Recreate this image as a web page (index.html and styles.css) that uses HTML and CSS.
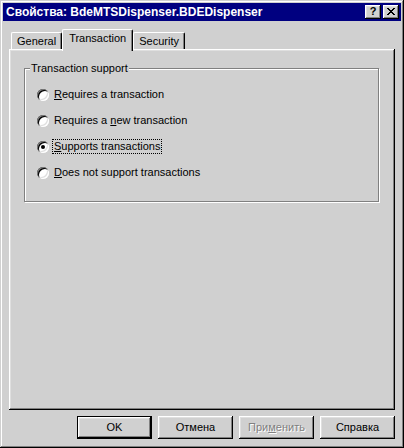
FILE: index.html
```html
<!DOCTYPE html>
<html>
<head>
<meta charset="utf-8">
<link rel="stylesheet" href="styles.css">
</head>
<body>
<div class="window">
  <div class="titlebar">
    <span class="title">Свойства: BdeMTSDispenser.BDEDispenser</span>
    <div class="tbtns">
      <span class="tbtn help">?</span>
      <span class="tbtn close"><svg width="8" height="7" viewBox="0 0 8 7" shape-rendering="crispEdges"><path fill="#000" d="M0 0h2v1H0zM6 0h2v1H6zM1 1h2v1H1zM5 1h2v1H5zM2 2h4v1H2zM3 3h2v1H3zM2 4h4v1H2zM1 5h2v1H1zM5 5h2v1H5zM0 6h2v1H0zM6 6h2v1H6z"/></svg></span>
    </div>
  </div>
  <div class="content">
    <div class="tabs">
      <div class="tab">General</div>
      <div class="tab active">Transaction</div>
      <div class="tab">Security</div>
    </div>
    <div class="panel">
      <fieldset class="group">
        <legend>Transaction support</legend>
        <div class="opt"><span class="radio"></span><span class="lbl"><u>R</u>equires a transaction</span></div>
        <div class="opt"><span class="radio"></span><span class="lbl">Requires a <u>n</u>ew transaction</span></div>
        <div class="opt"><span class="radio checked"></span><span class="lbl focus"><u>S</u>upports transactions</span></div>
        <div class="opt"><span class="radio"></span><span class="lbl"><u>D</u>oes not support transactions</span></div>
      </fieldset>
    </div>
    <div class="buttons">
      <div class="btn default">OK</div>
      <div class="btn">Отмена</div>
      <div class="btn disabled">При<u>м</u>енить</div>
      <div class="btn">Справка</div>
    </div>
  </div>
</div>
</body>
</html>
```
FILE: styles.css
```css
html, body {
  margin: 0;
  padding: 0;
  background: #d0d0d0;
}
body {
  font-family: "Liberation Sans", Arial, sans-serif;
  font-size: 11px;
  color: #000;
}
.window {
  width: 404px;
  height: 448px;
  box-sizing: border-box;
  padding: 3px;
  background: #d0d0d0;
  box-shadow: inset -1px -1px #000, inset 1px 1px #d0d0d0, inset -2px -2px #808080, inset 2px 2px #fff;
  display: flex;
  flex-direction: column;
}
.titlebar {
  height: 18px;
  flex: none;
  background: #000080;
  display: flex;
  align-items: center;
  justify-content: space-between;
  padding: 0 2px 0 3px;
  color: #fff;
}
.title {
  font-weight: bold;
  font-size: 12px;
  line-height: 14px;
}
.tbtns {
  display: flex;
  gap: 2px;
}
.tbtn {
  width: 16px;
  height: 14px;
  box-sizing: border-box;
  background: #d0d0d0;
  box-shadow: inset -1px -1px #000, inset 1px 1px #fff, inset -2px -2px #808080, inset 2px 2px #dfdfdf;
  display: flex;
  align-items: center;
  justify-content: center;
  color: #000;
}
.help {
  font-weight: bold;
  font-size: 11px;
  line-height: 11px;
  padding-bottom: 1px;
}
.close svg {
  display: block;
  margin-top: -1px;
}
.content {
  flex: 1;
  display: flex;
  flex-direction: column;
  padding: 8px 6px 0 6px;
}
.tabs {
  display: flex;
  align-items: flex-end;
  padding-left: 2px;
  position: relative;
  z-index: 1;
  margin-bottom: -2px;
}
.tab {
  box-sizing: border-box;
  height: 17px;
  padding: 2px 5px 0 5px;
  line-height: 13px;
  border-top: 1px solid #fff;
  border-left: 1px solid #fff;
  border-right: 1px solid #000;
  border-radius: 2px 2px 0 0;
  box-shadow: inset -1px 0 #808080;
  background: #d0d0d0;
  margin-bottom: 2px;
}
.tab.active {
  height: 22px;
  padding: 2px 6px 0 6px;
  margin-bottom: 0;
}
.panel {
  flex: 1;
  box-sizing: border-box;
  padding: 13px 16px 0 15px;
  box-shadow: inset -1px -1px #000, inset 1px 1px #fff, inset -2px -2px #808080, inset 2px 2px #dfdfdf;
}
.group {
  margin: 0;
  border: 1px solid #808080;
  box-shadow: 1px 1px 0 #fff, inset 1px 1px 0 #fff;
  padding: 12px 12px 21px 12px;
  display: flex;
  flex-direction: column;
  gap: 11px;
}
.group legend {
  padding: 0 1px;
  margin-left: -7px;
  line-height: 13px;
  background: #d0d0d0;
}
.opt {
  display: flex;
  align-items: center;
  height: 15px;
}
.radio {
  width: 12px;
  height: 12px;
  flex: none;
  border-radius: 50%;
  background: #fff;
  box-shadow: inset 1px 1px #808080, inset -1px -1px #fff, inset 2px 2px #000, inset -2px -2px #dfdfdf;
  margin-right: 3px;
  display: flex;
  align-items: center;
  justify-content: center;
}
.radio.checked::after {
  content: "";
  width: 4px;
  height: 4px;
  border-radius: 50%;
  background: #000;
}
.lbl {
  border: 1px dotted transparent;
  padding: 0 1px;
  line-height: 13px;
}
.lbl.focus {
  border-color: #000;
}
u {
  text-underline-offset: 1px;
}
.buttons {
  display: flex;
  justify-content: flex-end;
  gap: 6px;
  margin-top: 6px;
  padding-bottom: 6px;
}
.btn {
  width: 75px;
  height: 23px;
  box-sizing: border-box;
  background: #d0d0d0;
  box-shadow: inset -1px -1px #000, inset 1px 1px #fff, inset -2px -2px #808080, inset 2px 2px #dfdfdf;
  display: flex;
  align-items: center;
  justify-content: center;
  line-height: 13px;
}
.btn.default {
  box-shadow: inset 0 0 0 1px #000, inset -2px -2px #000, inset 2px 2px #fff, inset -3px -3px #808080, inset 3px 3px #dfdfdf;
}
.btn.disabled {
  color: #808080;
  text-shadow: 1px 1px 0 #fff;
}
```
